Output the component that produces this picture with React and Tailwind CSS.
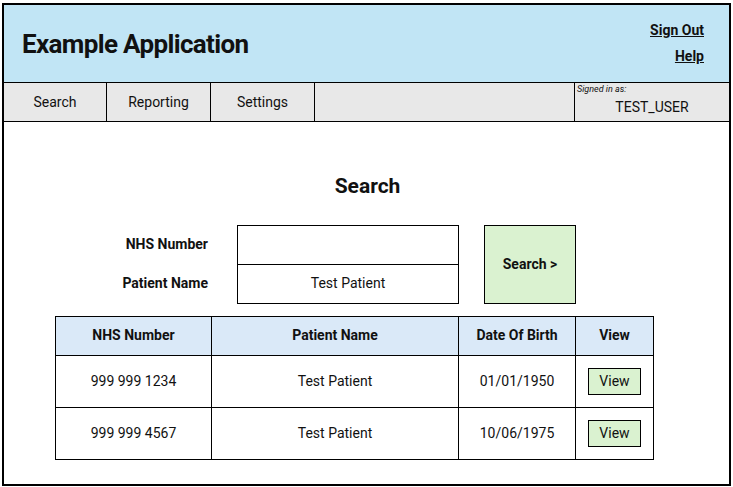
export default function App() {
    const rows = [
        { nhs: "999 999 1234", name: "Test Patient", dob: "01/01/1950" },
        { nhs: "999 999 4567", name: "Test Patient", dob: "10/06/1975" },
    ]

    return (
        <div className="w-[733px] h-[487px] bg-white pt-[3px] pl-[2px] font-['Liberation_Sans_Narrow','Roboto',sans-serif] text-[#111]">
            <div className="w-[729px] h-[483px] border-2 border-black flex flex-col">
                {/* Header */}
                <div className="h-[77px] bg-[#c1e5f5] flex items-center justify-between pl-[18px] pr-[25px]">
                    <h1 className="text-[26px] font-bold tracking-tight mt-[2px]">Example Application</h1>
                    <div className="flex flex-col items-end gap-[5px] text-[14px] font-bold underline mt-[-1px]">
                        <a href="#">Sign Out</a>
                        <a href="#">Help</a>
                    </div>
                </div>

                {/* Nav */}
                <div className="h-[40px] bg-[#e8e8e8] border-y border-black flex text-[14px]">
                    <div className="w-[103px] border-r border-black flex items-center justify-center">Search</div>
                    <div className="w-[104px] border-r border-black flex items-center justify-center">Reporting</div>
                    <div className="w-[104px] border-r border-black flex items-center justify-center">Settings</div>
                    <div className="w-[260px] border-r border-black" />
                    <div className="flex-1 flex flex-col pl-[2px]">
                        <span className="text-[9px] italic leading-[12px]">Signed in as:</span>
                        <span className="text-[14px] text-center pr-[2px] mt-[2px]">TEST_USER</span>
                    </div>
                </div>

                {/* Content */}
                <div className="flex-1 flex flex-col">
                    <h2 className="text-[21px] font-bold mt-[49px] self-center ml-[2px]">Search</h2>

                    <div className="flex mt-[22px] ml-[51px] text-[14px]">
                        <div className="flex flex-col w-[182px] font-bold">
                            <div className="h-[39px] flex items-center justify-end pr-[29px]">NHS Number</div>
                            <div className="h-[39px] flex items-center justify-end pr-[29px]">Patient Name</div>
                        </div>
                        <div className="w-[222px] border border-black flex flex-col">
                            <div className="h-[39px] border-b border-black" />
                            <div className="flex-1 flex items-center justify-center">Test Patient</div>
                        </div>
                        <button className="ml-[25px] w-[92px] h-[79px] bg-[#daf2d0] border border-black font-bold text-[14px]">
                            Search &gt;
                        </button>
                    </div>

                    <table className="self-start mt-[12px] ml-[51px] border-collapse text-[14px]">
                        <thead>
                            <tr className="bg-[#dae9f8] h-[39px] font-bold">
                                <th className="w-[156px] border border-black">NHS Number</th>
                                <th className="w-[247px] border border-black">Patient Name</th>
                                <th className="w-[117px] border border-black">Date Of Birth</th>
                                <th className="w-[78px] border border-black">View</th>
                            </tr>
                        </thead>
                        <tbody>
                            {rows.map((r, i) => (
                                <tr key={i} className="h-[52px]">
                                    <td className="border border-black text-center">{r.nhs}</td>
                                    <td className="border border-black text-center">{r.name}</td>
                                    <td className="border border-black text-center">{r.dob}</td>
                                    <td className="border border-black text-center">
                                        <button className="w-[53px] h-[27px] bg-[#daf2d0] border border-black">View</button>
                                    </td>
                                </tr>
                            ))}
                        </tbody>
                    </table>
                </div>
            </div>
        </div>
    )
}
